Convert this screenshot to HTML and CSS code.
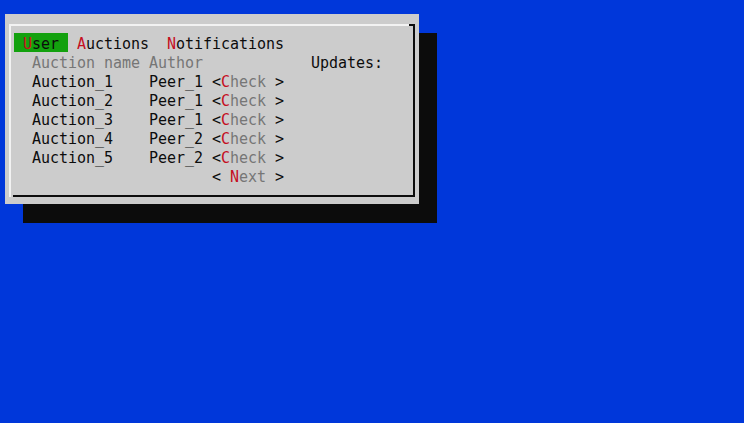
FILE: index.html
```html
<!DOCTYPE html>
<html lang="en">
<head>
<meta charset="utf-8">
<title>Auctions</title>
<link rel="stylesheet" href="styles.css">
</head>
<body>
<div class="screen">
  <div class="dialog">
    <div class="frame">
      <div class="menubar">
        <span class="menu-item active"><span class="hk">U</span>ser</span>
        <span class="menu-item"><span class="hk">A</span>uctions</span>
        <span class="menu-item"><span class="hk">N</span>otifications</span>
      </div>
      <div class="content">
        <div class="list">
          <div class="row header"><span class="name">Auction name</span><span class="author">Author</span></div>
          <div class="row"><span class="name">Auction_1</span><span class="author">Peer_1</span><span class="btn">&lt;<span class="hk">C</span><span class="dim">heck</span> &gt;</span></div>
          <div class="row"><span class="name">Auction_2</span><span class="author">Peer_1</span><span class="btn">&lt;<span class="hk">C</span><span class="dim">heck</span> &gt;</span></div>
          <div class="row"><span class="name">Auction_3</span><span class="author">Peer_1</span><span class="btn">&lt;<span class="hk">C</span><span class="dim">heck</span> &gt;</span></div>
          <div class="row"><span class="name">Auction_4</span><span class="author">Peer_2</span><span class="btn">&lt;<span class="hk">C</span><span class="dim">heck</span> &gt;</span></div>
          <div class="row"><span class="name">Auction_5</span><span class="author">Peer_2</span><span class="btn">&lt;<span class="hk">C</span><span class="dim">heck</span> &gt;</span></div>
          <div class="row pager"><span class="btn">&lt; <span class="hk">N</span><span class="dim">ext</span> &gt;</span></div>
        </div>
        <div class="updates">Updates:</div>
      </div>
    </div>
  </div>
</div>
</body>
</html>
```
FILE: styles.css
```css
:root {
  --cell: 9px;
  --line: 19px;
}

html, body {
  margin: 0;
  padding: 0;
  background: #0037da;
}

.screen {
  width: 744px;
  height: 423px;
  box-sizing: border-box;
  padding: 14px 0 0 5px;
  font-family: "DejaVu Sans Mono", "Liberation Mono", monospace;
  font-size: 15px;
  line-height: var(--line);
  letter-spacing: -0.03px;
  color: #0c0c0c;
  overflow: hidden;
}

.dialog {
  width: 414px;
  height: 190px;
  box-sizing: border-box;
  padding: 10px 4px 7px 4px;
  background: #cccccc;
  box-shadow: 18px 19px 0 #0c0c0c;
}

.frame {
  position: relative;
  height: 100%;
  box-sizing: border-box;
  border-top: 2px solid #f2f2f2;
  border-left: 2px solid #f2f2f2;
  border-right: 2px solid #0c0c0c;
  border-bottom: 2px solid #0c0c0c;
  padding: 7px 0 0 3px;
}

.frame::after {
  content: "";
  position: absolute;
  top: -2px;
  right: -2px;
  width: 6px;
  height: 2px;
  background: #0c0c0c;
}

.frame::before {
  content: "";
  position: absolute;
  left: -2px;
  bottom: -2px;
  width: 4px;
  height: 2px;
  background: linear-gradient(to right, #f2f2f2 0 2px, #cccccc 2px 4px);
}

.menubar {
  display: flex;
  white-space: pre;
}

.menu-item,
.row,
.updates {
  height: var(--line);
  box-sizing: border-box;
  padding-top: 2px;
}

.menu-item {
  padding-left: var(--cell);
  padding-right: var(--cell);
}

.menu-item.active {
  background: #13a10e;
}

.hk {
  color: #c50f1f;
}

.dim {
  color: #767676;
}

.content {
  display: flex;
}

.list {
  flex: none;
  width: calc(var(--cell) * 31);
  margin-left: calc(var(--cell) * 2);
}

.row {
  display: flex;
  white-space: pre;
}

.row.header {
  color: #767676;
}

.name {
  flex: none;
  width: calc(var(--cell) * 13);
}

.author {
  flex: none;
  width: calc(var(--cell) * 7);
}

.btn {
  flex: none;
}

.row.pager {
  padding-left: calc(var(--cell) * 20);
}

.updates {
  white-space: pre;
}
```
